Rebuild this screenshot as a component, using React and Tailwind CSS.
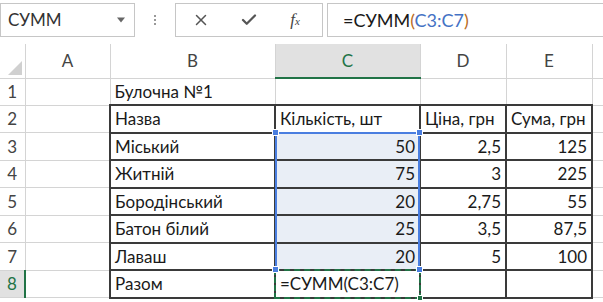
import { X, Check } from "lucide-react";

const rows = [
  { n: 1, b: "Булочна №1", c: "", d: "", e: "" },
  { n: 2, b: "Назва", c: "Кількість, шт", d: "Ціна, грн", e: "Сума, грн", head: true },
  { n: 3, b: "Міський", c: "50", d: "2,5", e: "125" },
  { n: 4, b: "Житній", c: "75", d: "3", e: "225" },
  { n: 5, b: "Бородінський", c: "20", d: "2,75", e: "55" },
  { n: 6, b: "Батон білий", c: "25", d: "3,5", e: "87,5" },
  { n: 7, b: "Лаваш", c: "20", d: "5", e: "100" },
  { n: 8, b: "Разом", c: "", d: "", e: "" },
];

const font = { fontFamily: "Lato, 'Open Sans', sans-serif" };

const Handle = ({ className }) => (
  <div className={`absolute w-[7px] h-[7px] bg-[#4a7ee0] border border-white ${className}`}></div>
);

const App = () => {
  return (
    <div className="w-[603px] h-[302px] bg-white overflow-hidden relative text-[#1a1a1a]" style={font}>
      {/* Formula bar */}
      <div className="h-[44px] flex items-start pt-[3px]">
        <div className="w-[135px] h-[34px] border border-[#c6c6c6] flex items-center justify-between pl-[7px] pr-[8px]">
          <span className="text-[17px] text-[#333]">СУММ</span>
          <svg width="10" height="6" viewBox="0 0 10 6"><path d="M1 0.5 L9 0.5 L5 5.5 Z" fill="#666" /></svg>
        </div>
        <div className="w-[40px] h-[34px] flex flex-col items-center justify-center gap-[2px]">
          <div className="w-[2px] h-[2px] bg-[#999]"></div>
          <div className="w-[2px] h-[2px] bg-[#999]"></div>
          <div className="w-[2px] h-[2px] bg-[#999]"></div>
        </div>
        <div className="w-[148px] h-[34px] border border-[#c6c6c6] flex items-center">
          <div className="w-[50px] flex justify-center"><X size={18} strokeWidth={2} color="#555" /></div>
          <div className="w-[46px] flex justify-center"><Check size={18} strokeWidth={3} color="#555" /></div>
          <div className="w-[46px] flex justify-center">
            <span className="italic text-[17px] text-[#444]" style={{ fontFamily: "'Liberation Serif', serif" }}>
              f<span className="text-[11px]">x</span>
            </span>
          </div>
        </div>
        <div className="ml-[4px] flex-1 h-[34px] border border-[#c6c6c6] border-r-0 flex items-center pl-[15px]">
          <span className="text-[18px] text-[#1a1a1a]">
            =СУММ<span className="text-[#b86a1e]">(</span>
            <span className="text-[#4472c4]">С3:С7</span>
            <span className="text-[#b86a1e]">)</span>
          </span>
        </div>
      </div>

      {/* Grid */}
      <table className="table-fixed border-collapse text-[17px] w-[611px]">
        <colgroup>
          <col className="w-[25px]" />
          <col className="w-[85px]" />
          <col className="w-[165px]" />
          <col className="w-[145px]" />
          <col className="w-[86px]" />
          <col className="w-[86px]" />
          <col className="w-[19px]" />
        </colgroup>
        <thead>
          <tr className="h-[34px]">
            <th className="border-r border-b border-[#d4d4d4] relative p-0">
              <svg className="absolute right-[3px] bottom-[3px]" width="14" height="14" viewBox="0 0 14 14"><path d="M14 0 L14 14 L0 14 Z" fill="#d0d0d0" /></svg>
            </th>
            {["A", "B"].map((l) => (
              <th key={l} className="font-normal text-[#444] border-r border-b border-[#d4d4d4]">{l}</th>
            ))}
            <th className="font-normal text-[#217346] bg-[#e1e1e1] border-r border-[#d4d4d4] border-b-2 border-b-[#217346]">C</th>
            {["D", "E"].map((l) => (
              <th key={l} className="font-normal text-[#444] border-r border-b border-[#d4d4d4]">{l}</th>
            ))}
            <th className="border-b border-[#d4d4d4]"></th>
          </tr>
        </thead>
        <tbody>
          {rows.map((r) => {
            const inTable = r.n >= 2;
            const dark = "border-2 border-[#3a3a3a]";
            const light = "border-r border-b border-[#d4d4d4]";
            const selC = r.n >= 3 && r.n <= 7;
            return (
              <tr key={r.n} className="h-[27px]">
                <td
                  className={
                    r.n === 8
                      ? "text-center text-[#217346] bg-[#e1e1e1] border-b border-[#d4d4d4] border-r-2 border-r-[#217346] p-0"
                      : "text-center text-[#444] border-r border-b border-[#d4d4d4] p-0"
                  }
                >
                  {r.n}
                </td>
                <td className={light}></td>
                <td className={`${inTable ? dark : light} px-[4px] whitespace-nowrap`}>{r.b}</td>
                <td
                  className={`${inTable ? dark : light} px-[4px] whitespace-nowrap relative ${
                    selC ? "bg-[#e9eef6] text-right" : ""
                  }`}
                >
                  {r.c}
                  {selC && (
                    <>
                      <div className="absolute left-[-1px] top-[-2px] bottom-[-2px] w-[2px] bg-[#4a7ee0]"></div>
                      <div className="absolute right-[-1px] top-[-2px] bottom-[-2px] w-[2px] bg-[#4a7ee0]"></div>
                    </>
                  )}
                  {r.n === 3 && (
                    <>
                      <div className="absolute left-[-1px] right-[-1px] top-[-2px] h-[2px] bg-[#4a7ee0]"></div>
                      <Handle className="left-[-4px] top-[-5px]" />
                      <Handle className="right-[-4px] top-[-5px]" />
                    </>
                  )}
                  {r.n === 8 && (
                    <>
                      <div className="absolute inset-[-2px] border-2 border-dashed border-[#217346]"></div>
                      <span>=СУММ(С3:С7)</span>
                      <Handle className="left-[-4px] top-[-5px]" />
                      <Handle className="right-[-4px] top-[-5px]" />
                      <div className="absolute right-[-4px] bottom-[-4px] w-[6px] h-[6px] bg-[#217346] border border-white"></div>
                    </>
                  )}
                </td>
                <td className={`${inTable ? dark : light} px-[4px] whitespace-nowrap ${r.head ? "" : "text-right"}`}>{r.d}</td>
                <td className={`${inTable ? dark : light} px-[4px] whitespace-nowrap ${r.head ? "" : "text-right"}`}>{r.e}</td>
                <td className="border-b border-[#d4d4d4]"></td>
              </tr>
            );
          })}
        </tbody>
      </table>
    </div>
  );
};

export default App;
